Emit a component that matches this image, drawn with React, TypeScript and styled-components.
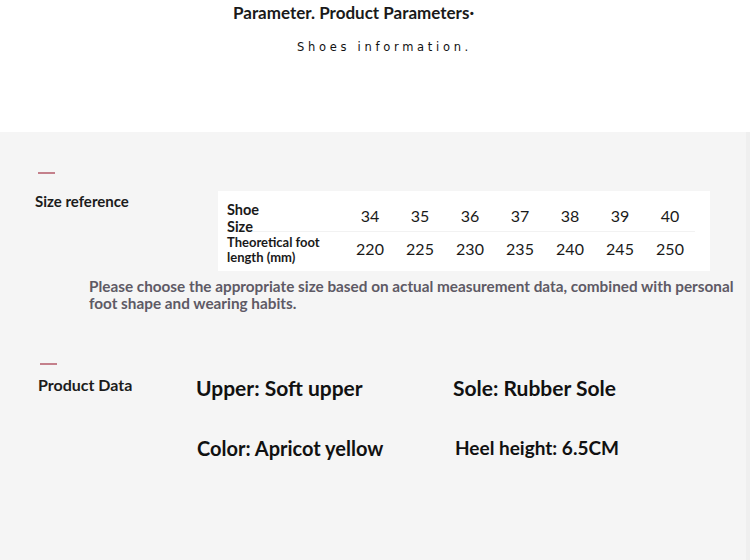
import styled, { createGlobalStyle } from "styled-components"

const GlobalStyle = createGlobalStyle`
  html, body {
    margin: 0;
    padding: 0;
    background: #f5f5f5;
    font-family: Lato, "Open Sans", sans-serif;
    color: #111;
  }
`

const Page = styled.div`
  width: 750px;
  height: 560px;
  overflow: hidden;
  display: flex;
  flex-direction: column;
`

const Header = styled.header`
  height: 132px;
  background: #fff;
  display: flex;
  flex-direction: column;
  box-sizing: border-box;
  padding-top: 3px;
`

const Title = styled.h1`
  margin: 0 0 0 233px;
  font-size: 17px;
  font-weight: 700;
  line-height: 20px;
  color: #1a1a1a;
`

const Subtitle = styled.p`
  margin: 17px 0 0 297px;
  font-family: "DejaVu Sans", "Liberation Sans", sans-serif;
  font-size: 11.5px;
  letter-spacing: 3.7px;
  line-height: 14px;
  color: #111;
`

const Body = styled.main`
  flex: 1;
  background: #f5f5f5;
  border-right: 4px solid #efefef;
  padding-top: 40px;
`

const Section = styled.section<{ $left: number; $top?: number }>`
  padding-left: ${(p) => p.$left}px;
  margin-top: ${(p) => p.$top ?? 0}px;
`

const SectionRow = styled.div`
  display: flex;
  align-items: flex-start;
`

const SectionHead = styled.div<{ $width: number }>`
  width: ${(p) => p.$width}px;
  flex-shrink: 0;
  display: flex;
  flex-direction: column;
`

const Dash = styled.span<{ $offset: number; $top?: number }>`
  display: block;
  width: 17px;
  height: 2px;
  margin: ${(p) => p.$top ?? 0}px 0 0 ${(p) => p.$offset}px;
  background: #c4808b;
`

const SectionTitle = styled.h2<{ $size: number; $gap: number }>`
  margin: ${(p) => p.$gap}px 0 0;
  font-size: ${(p) => p.$size}px;
  font-weight: 700;
  line-height: 20px;
  color: #1c1c1c;
`

const SizeTable = styled.div`
  margin-top: 19px;
  background: #fff;
  width: 492px;
  box-sizing: border-box;
  padding: 8px 15px 6px 9px;
  display: grid;
  grid-template-columns: 118px repeat(7, 50px);
`

const RowLabel = styled.div<{ $small?: boolean }>`
  font-size: ${(p) => (p.$small ? 13 : 14.5)}px;
  line-height: ${(p) => (p.$small ? 15 : 17)}px;
  font-weight: 700;
  color: #1a1a1a;
  height: 33px;
  padding-top: ${(p) => (p.$small ? 2 : 5)}px;
  display: flex;
  flex-direction: column;
  justify-content: center;
  border-bottom: ${(p) => (p.$small ? "none" : "1px solid #f2f2f2")};
  box-sizing: border-box;
`

const Cell = styled.div<{ $last?: boolean }>`
  height: 33px;
  display: flex;
  align-items: center;
  justify-content: center;
  font-size: 16px;
  color: #1a1a1a;
  border-bottom: ${(p) => (p.$last ? "none" : "1px solid #f2f2f2")};
  box-sizing: border-box;
`

const Note = styled.p`
  margin: 7px 0 0 54px;
  font-size: 15.3px;
  font-weight: 700;
  line-height: 17px;
  color: #5e5a65;
`

const DataGrid = styled.div`
  margin-top: 15px;
  display: grid;
  grid-template-columns: 257px 257px;
  row-gap: 34px;
`

const DataItem = styled.div<{ $size: number; $shift: number }>`
  margin-left: ${(p) => p.$shift}px;
  font-size: ${(p) => p.$size}px;
  font-weight: 700;
  line-height: 26px;
  color: #111;
`

const sizes = ["34", "35", "36", "37", "38", "39", "40"]
const lengths = ["220", "225", "230", "235", "240", "245", "250"]

const productData = [
  { text: "Upper: Soft upper", size: 21, shift: 0 },
  { text: "Sole: Rubber Sole", size: 21, shift: 0 },
  { text: "Color: Apricot yellow", size: 20, shift: 1 },
  { text: "Heel height: 6.5CM", size: 19, shift: 2 },
]

export default function App() {
  return (
    <Page>
      <GlobalStyle />
      <Header>
        <Title>Parameter. Product Parameters·</Title>
        <Subtitle>Shoes information.</Subtitle>
      </Header>

      <Body>
        <Section $left={35}>
          <SectionRow>
            <SectionHead $width={183}>
              <Dash $offset={3} />
              <SectionTitle $size={15} $gap={17}>
                Size reference
              </SectionTitle>
            </SectionHead>
            <SizeTable>
              <RowLabel>
                <span>Shoe</span>
                <span>Size</span>
              </RowLabel>
              {sizes.map((s) => (
                <Cell key={s}>{s}</Cell>
              ))}
              <RowLabel $small>
                <span>Theoretical foot</span>
                <span>length (mm)</span>
              </RowLabel>
              {lengths.map((l) => (
                <Cell key={l} $last>
                  {l}
                </Cell>
              ))}
            </SizeTable>
          </SectionRow>
          <Note>
            Please choose the appropriate size based on actual measurement data, combined with personal
            foot shape and wearing habits.
          </Note>
        </Section>

        <Section $left={38} $top={48}>
          <SectionRow>
            <SectionHead $width={158}>
              <Dash $offset={2} $top={3} />
              <SectionTitle $size={16} $gap={10}>
                Product Data
              </SectionTitle>
            </SectionHead>
            <DataGrid>
              {productData.map((d) => (
                <DataItem key={d.text} $size={d.size} $shift={d.shift}>
                  {d.text}
                </DataItem>
              ))}
            </DataGrid>
          </SectionRow>
        </Section>
      </Body>
    </Page>
  )
}
